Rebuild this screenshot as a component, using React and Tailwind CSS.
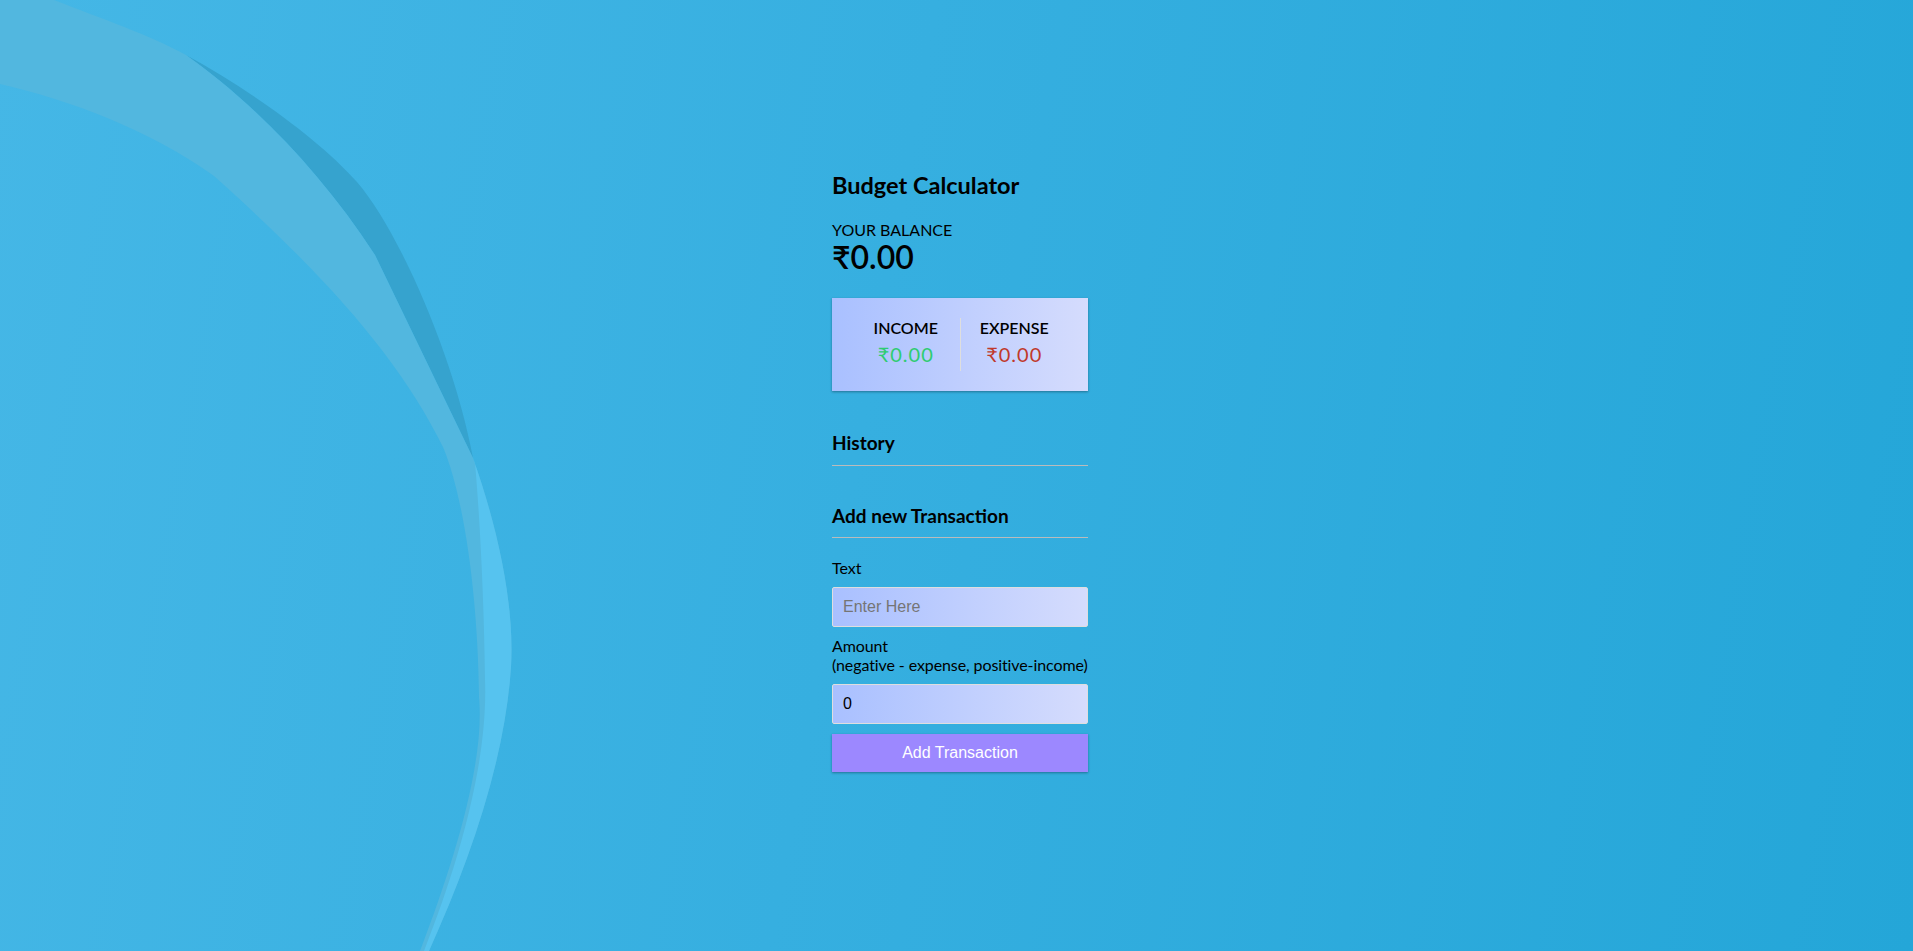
import React, { useState } from 'react';

const Waves = () => (
  <svg
    className="absolute inset-0 w-full h-full"
    viewBox="0 0 1913 951"
    preserveAspectRatio="none"
  >
    {/* dark wedge */}
    <path
      d="M186,55 C250,90 320,140 357,182 C400,232 455,360 473,458 L375,255 C320,170 250,100 186,55 Z"
      fill="#36a3ce"
    />
    {/* light band */}
    <path
      d="M0,0 L54,0 C100,18 150,35 186,55 C250,100 320,170 375,255 L473,458 C495,520 515,600 511,667 C505,760 470,860 429,951 L420,951 C455,860 485,760 479,697 C478,600 465,500 443,447 C400,360 330,280 214,176 C150,130 70,100 0,84 Z"
      fill="#52b7df"
    />
    {/* bright lower strip */}
    <path
      d="M473,458 C495,520 515,600 511,667 C505,760 470,860 429,951 L424,951 C460,860 488,760 485,680 C484,600 480,520 475,463 Z"
      fill="#56c3ef"
    />
  </svg>
);

const App = () => {
  const [text, setText] = useState('');
  const [amount, setAmount] = useState(0);

  return (
    <div className="relative h-[951px] overflow-hidden bg-[linear-gradient(100deg,#45b7e6_0%,#36afe0_45%,#24a6d8_100%)] font-['Lato','Noto_Sans',sans-serif] text-black">
      <Waves />

      <div className="relative flex justify-center pt-[171px] pl-[7px]">
        <div className="w-[256px]">
          <h2 className="text-[23.5px] font-bold leading-[28.8px]">Budget Calculator</h2>

          <h4 className="mt-[20px] text-[16px] leading-[19.2px] uppercase">Your Balance</h4>
          <h1 className="text-[32px] font-semibold leading-[38px] -mt-[1px]">₹0.00</h1>

          <div className="mt-[22px] flex p-[20px] bg-[linear-gradient(90deg,#a9c0ff,#d5dcfd)] shadow-[0_1px_3px_rgba(0,0,0,0.12),0_1px_2px_rgba(0,0,0,0.24)]">
            <div className="flex-1 text-center border-r border-[#dedede]">
              <h4 className="text-[16px] font-semibold leading-[19.2px] uppercase">Income</h4>
              <p className="my-[5px] text-[20px] leading-[24px] tracking-[1px] text-[#2ecc71]">₹0.00</p>
            </div>
            <div className="flex-1 text-center">
              <h4 className="text-[16px] font-semibold leading-[19.2px] uppercase">Expense</h4>
              <p className="my-[5px] text-[20px] leading-[24px] tracking-[1px] text-[#c0392b]">₹0.00</p>
            </div>
          </div>

          <h3 className="mt-[41px] pb-[10px] border-b border-[#bbbbbb] text-[19px] font-bold leading-[22.5px]">History</h3>
          <ul className="mt-[10px]"></ul>

          <h3 className="mt-[39px] pb-[10px] border-b border-[#bbbbbb] text-[19px] font-bold leading-[22.5px]">Add new Transaction</h3>

          <form className="mt-[10px]" onSubmit={e => e.preventDefault()}>
            <div>
              <label className="inline-block my-[10px] text-[16px] leading-[19px]">Text</label>
              <input
                type="text"
                value={text}
                onChange={e => setText(e.target.value)}
                placeholder="Enter Here"
                className="block w-full p-[10px] text-[16px] leading-[18px] font-['Liberation_Sans',Arial,sans-serif] border border-[#dedede] rounded-[2px] bg-[linear-gradient(90deg,#a9c0ff,#d5dcfd)] placeholder:text-[#757575] outline-none"
              />
            </div>
            <div>
              <label className="inline-block my-[10px] text-[16px] leading-[18.6px] whitespace-nowrap tracking-[-0.1px]">
                Amount <br />
                (negative - expense, positive-income)
              </label>
              <input
                type="number"
                value={amount}
                onChange={e => setAmount(e.target.value)}
                className="block w-full p-[10px] text-[16px] leading-[18px] font-['Liberation_Sans',Arial,sans-serif] border border-[#dedede] rounded-[2px] bg-[linear-gradient(90deg,#a9c0ff,#d5dcfd)] outline-none"
              />
            </div>
            <button className="block w-full mt-[10px] mb-[30px] p-[10px] text-[16px] leading-[18px] font-['Liberation_Sans',Arial,sans-serif] text-white bg-[#9c88ff] shadow-[0_1px_3px_rgba(0,0,0,0.12),0_1px_2px_rgba(0,0,0,0.24)] cursor-pointer">
              Add Transaction
            </button>
          </form>
        </div>
      </div>
    </div>
  );
};

export default App;
